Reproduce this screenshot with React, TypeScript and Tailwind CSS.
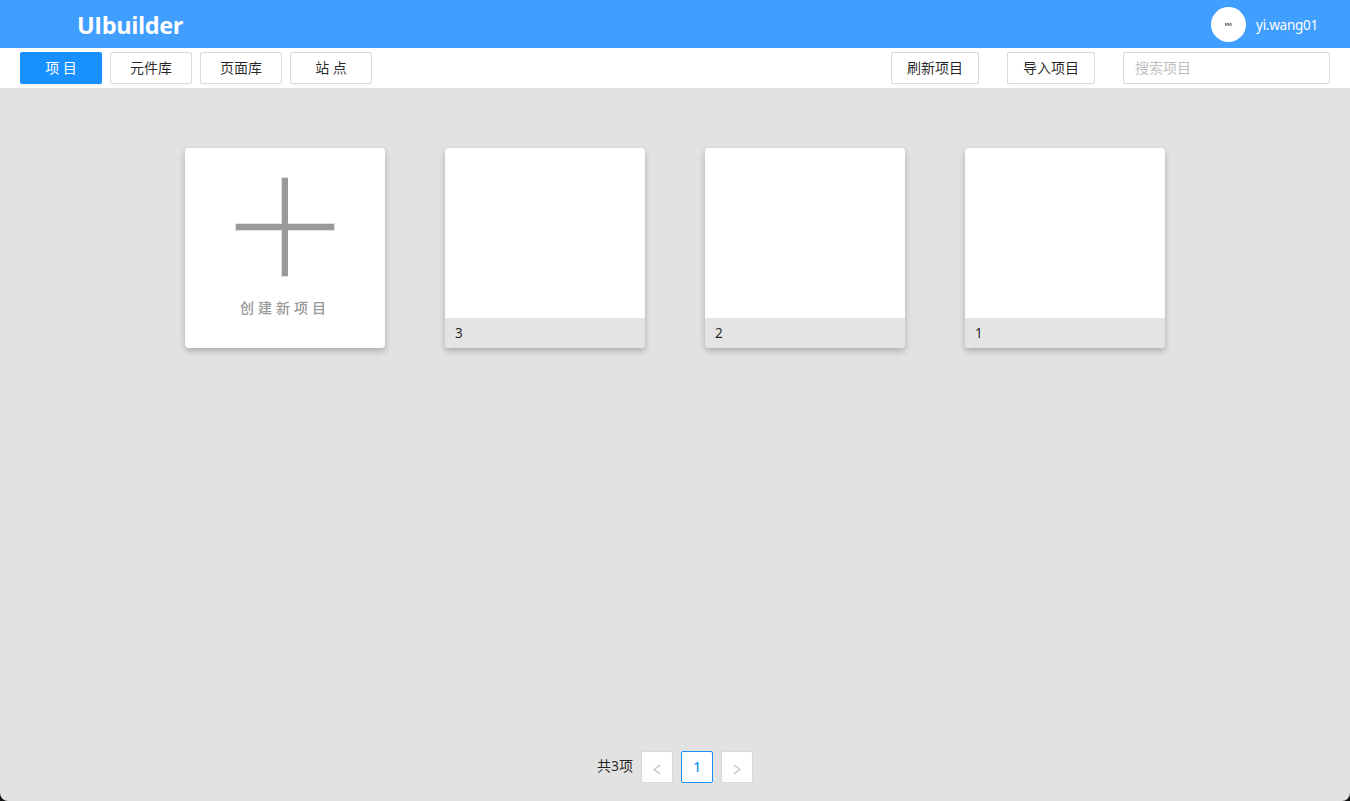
import React from "react";

const tabs = ["项 目", "元件库", "页面库", "站 点"];
const projects = ["3", "2", "1"];

function ToolButton({ label, className = "" }: { label: string; className?: string }) {
  return (
    <button
      className={`h-8 rounded-xs border border-[#d9d9d9] bg-white pb-px text-sm text-black/85 shadow-[0_2px_0_rgba(0,0,0,0.015)] ${className}`}
    >
      {label}
    </button>
  );
}

function Header() {
  return (
    <header className="flex h-12 items-center justify-between bg-[#409eff] pr-8 pl-[77px] text-white">
      <h1 className="pt-px font-['Open_Sans',sans-serif] text-[23.5px] leading-8 font-bold tracking-[-0.4px]">UIbuilder</h1>
      <div className="flex items-center gap-2.5 pt-px">
        <div className="flex size-[35px] items-center justify-center rounded-full bg-white">
          <svg width="7" height="3" viewBox="0 0 7 3" fill="none" stroke="#444" strokeWidth="0.7">
            <path d="M.5 0v2.3h1.3V0M4 .4H2.8v.9H4v1H2.7M6.5.4H5v2h1.4V1.3" />
          </svg>
        </div>
        <span className="w-[62px] pt-px text-[13.5px] leading-5 tracking-[-0.25px] whitespace-nowrap">yi.wang01</span>
      </div>
    </header>
  );
}

function Toolbar() {
  return (
    <div className="flex h-10 items-center justify-between bg-white px-5">
      <nav className="flex gap-2">
        {tabs.map((tab, i) =>
          i === 0 ? (
            <button key={tab} className="h-8 w-[82px] rounded-xs bg-[#1890ff] pb-px text-sm text-white shadow-[0_2px_0_rgba(0,0,0,0.045)]">
              {tab}
            </button>
          ) : (
            <ToolButton key={tab} label={tab} className="w-[82px]" />
          ),
        )}
      </nav>
      <div className="flex gap-7">
        <ToolButton label="刷新项目" className="w-[88px]" />
        <ToolButton label="导入项目" className="w-[88px]" />
        <input
          placeholder="搜索项目"
          className="h-8 w-[207px] rounded-xs border border-[#d9d9d9] bg-white px-[11px] pb-px text-sm placeholder:text-[#bfbfbf]"
        />
      </div>
    </div>
  );
}

function CreateCard() {
  return (
    <div className="flex size-[200px] flex-col items-center rounded bg-white pt-[29px] text-[#999] shadow-[0_3px_6px_rgba(0,0,0,0.24)]">
      <svg width="100" height="100" viewBox="0 0 100 100" shapeRendering="crispEdges">
        <path d="M46 0h7v46h47v8H53v46h-7V54H0v-8h46z" fill="#e2e2e2" />
        <path d="M47 1h6v46h46v6H53v46h-6V53H1v-6h46z" fill="#999" />
      </svg>
      <span className="mt-5 text-sm leading-[22px] font-medium tracking-[4px]">创建新项目</span>
    </div>
  );
}

function ProjectCard({ name }: { name: string }) {
  return (
    <div className="flex size-[200px] flex-col overflow-hidden rounded bg-white shadow-[0_3px_6px_rgba(0,0,0,0.24)]">
      <div className="flex-1" />
      <div className="h-[30px] bg-[#e4e4e4] px-2.5 text-[13.5px] leading-[30px] text-black/85">{name}</div>
    </div>
  );
}

function Chevron({ d }: { d: string }) {
  return (
    <svg className="mt-[5px]" width="8" height="11" viewBox="0 0 8 11" fill="none" stroke="#bfbfbf" strokeWidth="1.1">
      <path d={d} />
    </svg>
  );
}

function Pagination() {
  return (
    <div className="flex h-8 items-center gap-2 text-sm text-black/85">
      <span className="pb-0.5">共3项</span>
      <button className="flex size-8 items-center justify-center rounded-xs border border-[#d9d9d9] bg-white">
        <Chevron d="M7.2 1 1 5.5l6.2 4.5" />
      </button>
      <button className="size-8 rounded-xs border border-[#1890ff] bg-white pt-px text-[13.5px] font-medium text-[#1890ff]">1</button>
      <button className="flex size-8 items-center justify-center rounded-xs border border-[#d9d9d9] bg-white">
        <Chevron d="m.8 1 6.2 4.5L.8 10" />
      </button>
    </div>
  );
}

export default function App() {
  return (
    <div className="h-screen bg-[#111] font-['Noto_Sans','Noto_Sans_CJK_SC',sans-serif]">
      <div className="flex h-full flex-col overflow-hidden rounded-b-lg bg-[#e2e2e2]">
        <Header />
        <Toolbar />
        <main className="flex flex-1 flex-col items-center justify-between pt-[60px] pb-[18px]">
          <div className="flex gap-[60px]">
            <CreateCard />
            {projects.map((name) => (
              <ProjectCard key={name} name={name} />
            ))}
          </div>
          <Pagination />
        </main>
      </div>
    </div>
  );
}
